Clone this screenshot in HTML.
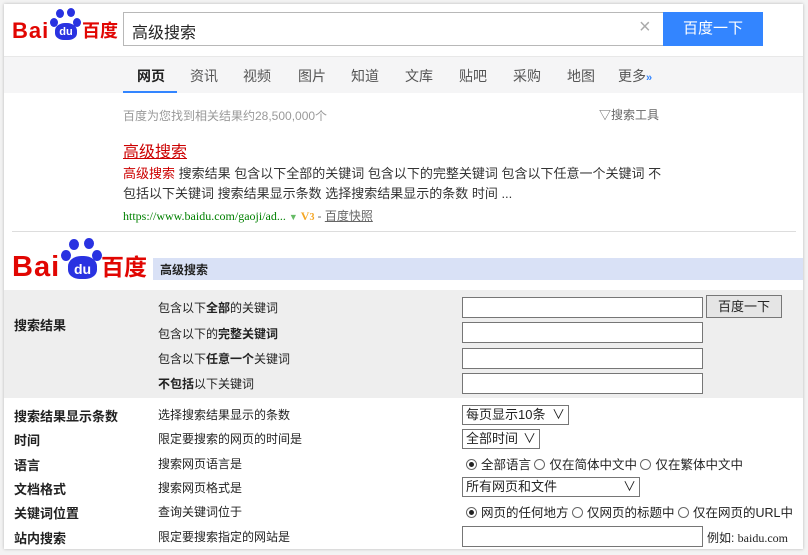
<!DOCTYPE html>
<html><head><meta charset="utf-8"><style>
*{margin:0;padding:0;box-sizing:border-box}
body{width:808px;height:555px;background:#f3f3f3;position:relative;overflow:hidden;font-family:"Liberation Sans","Noto Sans CJK SC",sans-serif;color:#222}
#w{position:absolute;left:4px;top:4px;width:799px;height:545px;background:#fff;box-shadow:0 0 3px rgba(0,0,0,.25)}
.a{position:absolute;white-space:nowrap}
.logo{font-weight:bold;color:#e10602}
.paw{position:absolute;background:#2932e1;border-radius:50%}
.nav{position:absolute;top:52px;left:0;width:799px;height:37px;background:#f5f5f6;border-top:1px solid #e8e8e8}
.nav span{position:absolute;top:9px;font-size:14px;color:#555}
.inp{position:absolute;background:#fff;border:1px solid #767676;height:21px;width:241px;left:458px}
.sel{position:absolute;left:458px;background:#fff;border:1px solid #767676;height:20px;font-size:13px;line-height:18px;padding-left:3px}
.c1{position:absolute;left:10px;font-size:13px;font-weight:bold}
.c2{position:absolute;left:154px;font-size:12px}
.rad{display:inline-block;width:11px;height:11px;border:1px solid #666;border-radius:50%;vertical-align:-1px;margin-right:4px;position:relative}
.rad.on::after{content:"";position:absolute;left:2px;top:2px;width:5px;height:5px;border-radius:50%;background:#222}
</style></head><body><div id="w">
<!-- header logo -->
<div class="a" style="left:8px;top:4px;width:104px;height:36px">
<div class="paw" style="left:44px;top:1px;width:8px;height:9px"></div>
<div class="paw" style="left:55px;top:0px;width:8px;height:9px"></div>
<div class="paw" style="left:38px;top:10px;width:8px;height:9px"></div>
<div class="paw" style="left:61px;top:10px;width:8px;height:9px"></div>
<div class="paw" style="left:43px;top:15px;width:22px;height:17px;border-radius:45% 45% 40% 40%;color:#fff;font-size:11px;text-align:center;line-height:19px;font-weight:bold">du</div>
<span class="a logo" style="left:0;top:11px;font-size:22px;line-height:24px;letter-spacing:1px">Bai</span>
<span class="a logo" style="left:70px;top:13px;font-size:18px;line-height:21px">百度</span>
</div>
<div class="a" style="left:119px;top:8px;width:541px;height:34px;border:1px solid #b8b8b8;border-right:none"></div>
<span class="a" style="left:128px;top:15px;font-size:16px;color:#222">高级搜索</span>
<span class="a" style="left:635px;top:12px;font-size:20px;color:#aaa;font-weight:100">×</span>
<div class="a" style="left:659px;top:8px;width:100px;height:34px;background:#3385ff;color:#fff;font-size:15px;text-align:center;line-height:34px">百度一下</div>
<div class="nav">
<span style="left:133px;color:#222;font-weight:bold">网页</span>
<div class="a" style="left:119px;top:34px;width:54px;height:2px;background:#3385ff"></div>
<span style="left:186px">资讯</span><span style="left:239px">视频</span><span style="left:294px">图片</span><span style="left:347px">知道</span><span style="left:401px">文库</span><span style="left:455px">贴吧</span><span style="left:509px">采购</span><span style="left:563px">地图</span><span style="left:614px">更多<b style="color:#3385ff;font-size:11px">»</b></span>
</div>
<span class="a" style="left:119px;top:103px;font-size:12px;color:#999">百度为您找到相关结果约28,500,000个</span>
<span class="a" style="left:595px;top:102px;font-size:12px;color:#666">▽搜索工具</span>
<span class="a" style="left:119px;top:134px;font-size:16px;color:#c00;text-decoration:underline">高级搜索</span>
<div class="a" style="left:119px;top:160px;font-size:13px;color:#333;line-height:20px"><span style="color:#c00">高级搜索</span> 搜索结果 包含以下全部的关键词 包含以下的完整关键词 包含以下任意一个关键词 不<br>包括以下关键词 搜索结果显示条数 选择搜索结果显示的条数 时间 ...</div>
<span class="a" style="left:119px;top:203px;font-size:12px;color:#008000;font-family:'Liberation Serif',serif">https://www.baidu.com/gaoji/ad... <span style="color:#6b6;font-size:9px">▼</span> <b style="color:#f5a623">V<small>3</small></b> <span style="color:#666;font-family:'Liberation Sans','Noto Sans CJK SC',sans-serif">- <u>百度快照</u></span></span>
<div class="a" style="left:8px;top:227px;width:784px;height:1px;background:#ddd"></div>
<!-- second logo -->
<div class="a" style="left:8px;top:233px;width:137px;height:44px">
<div class="paw" style="left:57px;top:2px;width:10px;height:11px"></div>
<div class="paw" style="left:72px;top:1px;width:10px;height:11px"></div>
<div class="paw" style="left:49px;top:13px;width:10px;height:11px"></div>
<div class="paw" style="left:80px;top:13px;width:10px;height:11px"></div>
<div class="paw" style="left:56px;top:19px;width:29px;height:23px;border-radius:45% 45% 40% 40%;color:#fff;font-size:14px;text-align:center;line-height:26px;font-weight:bold">du</div>
<span class="a logo" style="left:0;top:15px;font-size:29px;line-height:30px;letter-spacing:1px">Bai</span>
<span class="a logo" style="left:89px;top:18px;font-size:23px;line-height:25px">百度</span>
</div>
<div class="a" style="left:149px;top:254px;width:650px;height:22px;background:#d9e1f6"></div>
<span class="a" style="left:156px;top:257px;font-size:12px;font-weight:bold">高级搜索</span>
<div class="a" style="left:0;top:286px;width:799px;height:108px;background:#eee"></div>
<span class="c1" style="top:311px">搜索结果</span>
<span class="c2" style="top:295px">包含以下<b>全部</b>的关键词</span>
<span class="c2" style="top:321px">包含以下的<b>完整关键词</b></span>
<span class="c2" style="top:346px">包含以下<b>任意一个</b>关键词</span>
<span class="c2" style="top:371px"><b>不包括</b>以下关键词</span>
<div class="inp" style="top:293px"></div>
<div class="inp" style="top:318px"></div>
<div class="inp" style="top:344px"></div>
<div class="inp" style="top:369px"></div>
<div class="a" style="left:702px;top:291px;width:76px;height:23px;border:1px solid #777;background:#e5e5e5;font-size:13px;text-align:center;line-height:21px">百度一下</div>
<span class="c1" style="top:402px">搜索结果显示条数</span><span class="c2" style="top:402px">选择搜索结果显示的条数</span>
<div class="sel" style="top:401px;width:107px">每页显示10条 <span style="float:right;margin-right:3px">∨</span></div>
<span class="c1" style="top:426px">时间</span><span class="c2" style="top:426px">限定要搜索的网页的时间是</span>
<div class="sel" style="top:425px;width:78px">全部时间 <span style="float:right;margin-right:3px">∨</span></div>
<span class="c1" style="top:451px">语言</span><span class="c2" style="top:451px">搜索网页语言是</span>
<span class="a" style="left:462px;top:450px;font-size:12.5px"><i class="rad on"></i>全部语言 <i class="rad"></i>仅在简体中文中 <i class="rad"></i>仅在繁体中文中</span>
<span class="c1" style="top:475px">文档格式</span><span class="c2" style="top:475px">搜索网页格式是</span>
<div class="sel" style="top:473px;width:178px">所有网页和文件 <span style="float:right;margin-right:3px">∨</span></div>
<span class="c1" style="top:499px">关键词位置</span><span class="c2" style="top:499px">查询关键词位于</span>
<span class="a" style="left:462px;top:498px;font-size:12.5px"><i class="rad on"></i>网页的任何地方 <i class="rad"></i>仅网页的标题中 <i class="rad"></i>仅在网页的URL中</span>
<span class="c1" style="top:524px">站内搜索</span><span class="c2" style="top:524px">限定要搜索指定的网站是</span>
<div class="inp" style="top:522px"></div>
<span class="a" style="left:703px;top:525px;font-size:12px">例如: <span style="font-family:'Liberation Serif',serif">baidu.com</span></span>
</div></body></html>
